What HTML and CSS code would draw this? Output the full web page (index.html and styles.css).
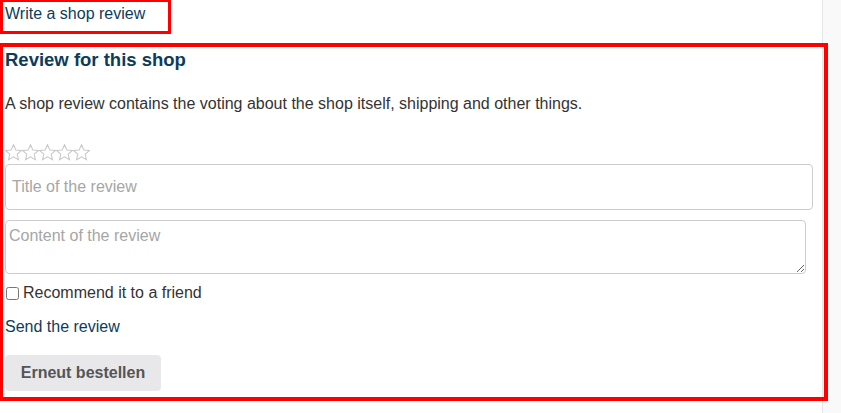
FILE: index.html
```html
<!DOCTYPE html>
<html>
<head>
<meta charset="utf-8">
<link rel="stylesheet" href="styles.css">
</head>
<body>
<div class="page">
  <main class="content">
    <div class="toggle-box">
      <a class="link" href="#">Write a shop review</a>
    </div>
    <section class="review-box">
      <h3 class="title">Review for this shop</h3>
      <p class="intro">A shop review contains the voting about the shop itself, shipping and other things.</p>
      <div class="stars">
        <svg class="star" viewBox="1.5 1.5 21 21"><path d="M12 2.5l2.9 6.3 6.9.7-5.2 4.6 1.5 6.8L12 17.4l-6.1 3.5 1.5-6.8-5.2-4.6 6.9-.7z"/></svg>
        <svg class="star" viewBox="1.5 1.5 21 21"><path d="M12 2.5l2.9 6.3 6.9.7-5.2 4.6 1.5 6.8L12 17.4l-6.1 3.5 1.5-6.8-5.2-4.6 6.9-.7z"/></svg>
        <svg class="star" viewBox="1.5 1.5 21 21"><path d="M12 2.5l2.9 6.3 6.9.7-5.2 4.6 1.5 6.8L12 17.4l-6.1 3.5 1.5-6.8-5.2-4.6 6.9-.7z"/></svg>
        <svg class="star" viewBox="1.5 1.5 21 21"><path d="M12 2.5l2.9 6.3 6.9.7-5.2 4.6 1.5 6.8L12 17.4l-6.1 3.5 1.5-6.8-5.2-4.6 6.9-.7z"/></svg>
        <svg class="star" viewBox="1.5 1.5 21 21"><path d="M12 2.5l2.9 6.3 6.9.7-5.2 4.6 1.5 6.8L12 17.4l-6.1 3.5 1.5-6.8-5.2-4.6 6.9-.7z"/></svg>
      </div>
      <input class="field" type="text" placeholder="Title of the review">
      <textarea class="area" placeholder="Content of the review"></textarea>
      <label class="check"><input type="checkbox" class="box"><span>Recommend it to a friend</span></label>
      <a class="link send" href="#">Send the review</a>
      <button class="btn">Erneut bestellen</button>
    </section>
  </main>
  <aside class="sidebar"></aside>
</div>
</body>
</html>
```
FILE: styles.css
```css
* { box-sizing: border-box; }
html, body { margin: 0; padding: 0; background: #fff; }
body { font-family: "Liberation Sans", Arial, sans-serif; font-size: 16px; color: #333; }
.page { display: flex; min-height: 413px; }
.content { width: 822px; flex: none; }
.sidebar { flex: 1; background: #f9f9f9; border-left: 1px solid #e6e6e6; }
.link { color: #0c3c5c; text-decoration: none; }
.toggle-box {
  width: 171px; height: 34px;
  border: 3px solid #ff0000; border-top-width: 2px;
  padding: 3px 0 0 2px;
  line-height: 18px;
}
.review-box {
  position: relative;
  width: 828px;
  margin-top: 9px;
  border: 4px solid #ff0000; border-left-width: 3px;
  padding: 2px 0 0 2px;
  height: 358px;
  display: flex; flex-direction: column; align-items: flex-start;
}
.title { margin: 0; font-size: 18.5px; font-weight: bold; color: #0c3c5c; line-height: 22px; }
.intro { margin: 24px 0 0; font-size: 16px; line-height: 18px; color: #333; }
.stars { display: flex; margin-top: 31px; margin-bottom: 3px; gap: 0; }
.star { width: 17px; height: 17px; fill: none; stroke: #c8c8c8; stroke-width: 1.3; }
.field {
  margin-top: 0; width: 808px; height: 46px;
  border: 1px solid #cccccc; border-radius: 4px;
  padding: 0 6px; font: 16px "Liberation Sans", Arial, sans-serif; color: #333;
}
.area {
  margin-top: 10px; width: 801px; height: 54px;
  border: 1px solid #cccccc; border-radius: 4px;
  padding: 6px 3px; font: 16px "Liberation Sans", Arial, sans-serif; color: #333;
  resize: vertical;
}
.field::placeholder, .area::placeholder { color: #a6a6a6; }
.check { display: flex; align-items: center; margin-top: 10px; line-height: 18px; }
.box { margin: 0 4px 0 1px; width: 13px; height: 13px; }
.send { margin-top: 16px; line-height: 18px; }
.btn {
  margin-top: 19px;
  width: 156px; height: 36px;
  background: #e8e7ea; border: none; border-radius: 4px;
  font: bold 16px "Liberation Sans", Arial, sans-serif; color: #555;
}
```
